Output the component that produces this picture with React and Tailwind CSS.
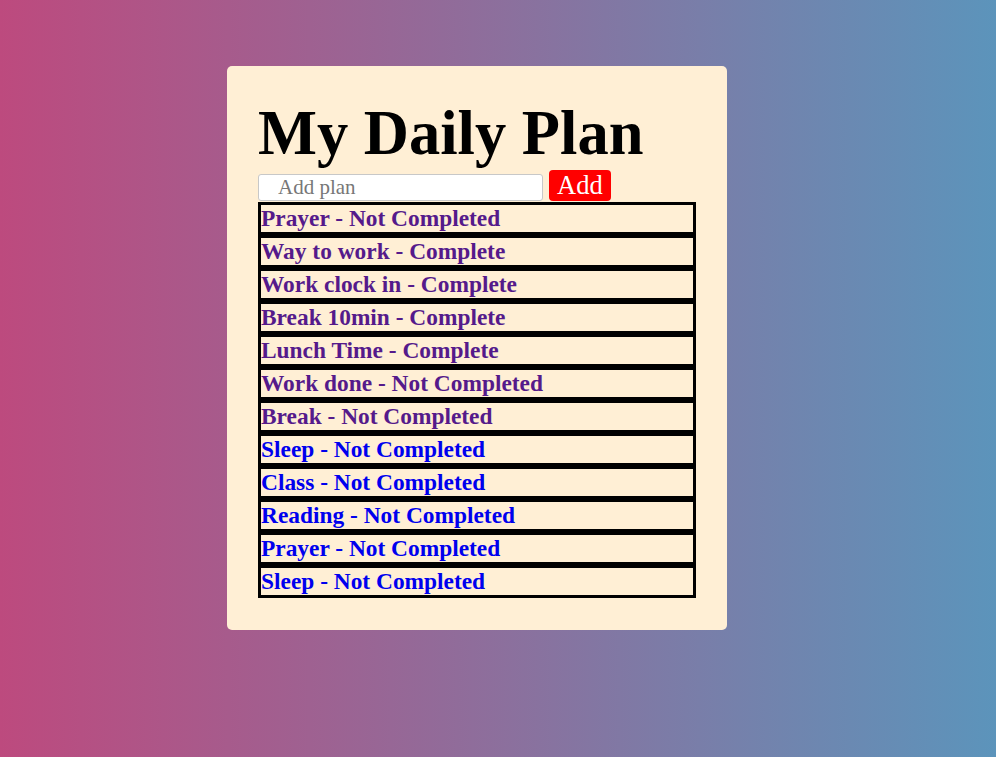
import React, { useState } from "react";

const initialPlans = [
  { text: "Prayer - Not Completed", visited: true },
  { text: "Way to work - Complete", visited: true },
  { text: "Work clock in - Complete", visited: true },
  { text: "Break 10min - Complete", visited: true },
  { text: "Lunch Time - Complete", visited: true },
  { text: "Work done - Not Completed", visited: true },
  { text: "Break - Not Completed", visited: true },
  { text: "Sleep - Not Completed", visited: false },
  { text: "Class - Not Completed", visited: false },
  { text: "Reading - Not Completed", visited: false },
  { text: "Prayer - Not Completed", visited: false },
  { text: "Sleep - Not Completed", visited: false },
];

function App() {
  const [plans, setPlans] = useState(initialPlans);
  const [value, setValue] = useState("");

  const addPlan = () => {
    if (!value.trim()) return;
    setPlans([...plans, { text: `${value} - Not Completed`, visited: false }]);
    setValue("");
  };

  return (
    <div className="min-h-screen bg-linear-to-r/srgb from-[#bd4a7e] to-[#5c94bb] pt-[66px] pl-[227px] font-['Liberation_Serif','Times_New_Roman',serif]">
      <div className="w-[500px] rounded-[5px] bg-[#ffefd5] px-[31px] pt-[31px] pb-[32px]">
        {/* Title */}
        <h1 className="text-[62.5px] font-bold leading-[72px] text-black">
          My Daily Plan
        </h1>

        {/* Input row */}
        <div className="mt-[1px] flex items-end gap-[6px]">
          <input
            value={value}
            onChange={(e) => setValue(e.target.value)}
            placeholder="Add plan"
            className="h-[27px] w-[285px] rounded-[3px] border border-[#c8c8c8] bg-white pl-[19px] text-[21px] leading-[24px] text-black placeholder:text-[#777]"
          />
          <button
            onClick={addPlan}
            className="h-[31px] rounded-[4px] bg-[#ff0000] px-[8px] text-[26.5px] leading-[31px] text-white"
          >
            Add
          </button>
        </div>

        {/* Plans */}
        <ul className="mt-[1px]">
          {plans.map((plan, i) => (
            <li
              key={i}
              className="border-[3px] border-black text-[23.4px] font-bold leading-[27px]"
            >
              <a
                href="#"
                className={plan.visited ? "text-[#551a8b]" : "text-[#0000ee]"}
              >
                {plan.text}
              </a>
            </li>
          ))}
        </ul>
      </div>
    </div>
  );
}

export default App;
